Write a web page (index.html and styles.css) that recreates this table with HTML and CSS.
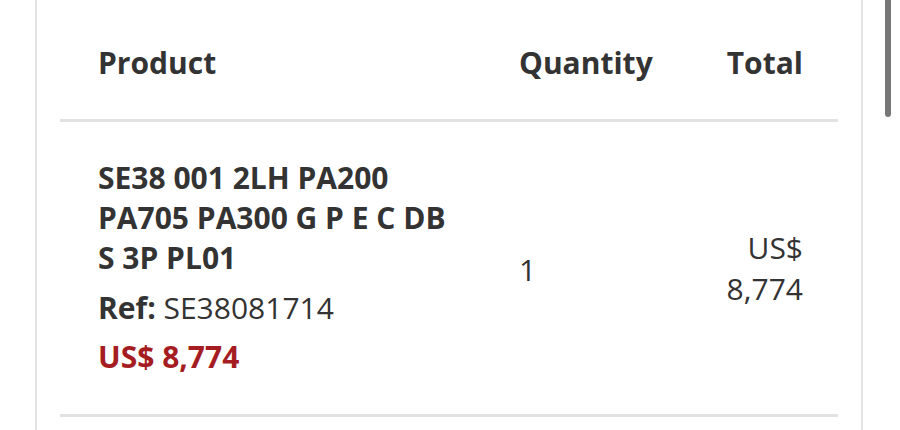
FILE: index.html
```html
<!DOCTYPE html>
<html lang="en">
<head>
<meta charset="utf-8">
<title>Order summary</title>
<link rel="stylesheet" href="styles.css">
</head>
<body>
<div class="card">
  <div class="table">
    <div class="row head">
      <div class="cell">Product</div>
      <div class="cell">Quantity</div>
      <div class="cell right">Total</div>
    </div>
    <div class="row item">
      <div class="cell product">
        <div class="name">SE38 001 2LH PA200 PA705 PA300 G P E C DB S 3P PL01</div>
        <div class="ref"><b>Ref:</b> SE38081714</div>
        <div class="price">US$ 8,774</div>
      </div>
      <div class="cell qty">1</div>
      <div class="cell right total">US$ 8,774</div>
    </div>
  </div>
</div>
<div class="scrollbar"></div>
</body>
</html>
```
FILE: styles.css
```css
html, body {
  margin: 0;
  padding: 0;
  background: #fff;
}
body {
  font-family: "Open Sans", "Noto Sans", sans-serif;
  color: #333;
  overflow: hidden;
}
.card {
  margin-left: 35px;
  width: 778px;
  border-left: 2px solid #e4e4e4;
  border-right: 2px solid #e4e4e4;
  padding: 0 23px;
  height: 430px;
}
.table {
  display: flex;
  flex-direction: column;
}
.row {
  display: grid;
  grid-template-columns: 421px 1fr 92px;
  padding: 0 35px 0 38px;
  border-bottom: 3px solid #e2e2e2;
  align-items: center;
}
.head {
  height: 122px;
  font-weight: 700;
  font-size: 30px;
  padding-top: 5px;
  box-sizing: border-box;
}
.right {
  text-align: right;
}
.item {
  padding-top: 36px;
  padding-bottom: 37px;
  font-size: 30px;
  line-height: 41px;
}
.name {
  font-weight: 700;
  width: 358px;
  line-height: 40px;
}
.ref {
  margin-top: 10px;
  line-height: 40px;
}
.ref b {
  font-weight: 700;
}
.price {
  margin-top: 9px;
  line-height: 40px;
  font-weight: 700;
  color: #a51d22;
}
.qty {
  padding-top: 4px;
}
.scrollbar {
  position: fixed;
  top: -10px;
  right: 9px;
  width: 6px;
  height: 127px;
  border-radius: 3px;
  background: #777;
}
```
